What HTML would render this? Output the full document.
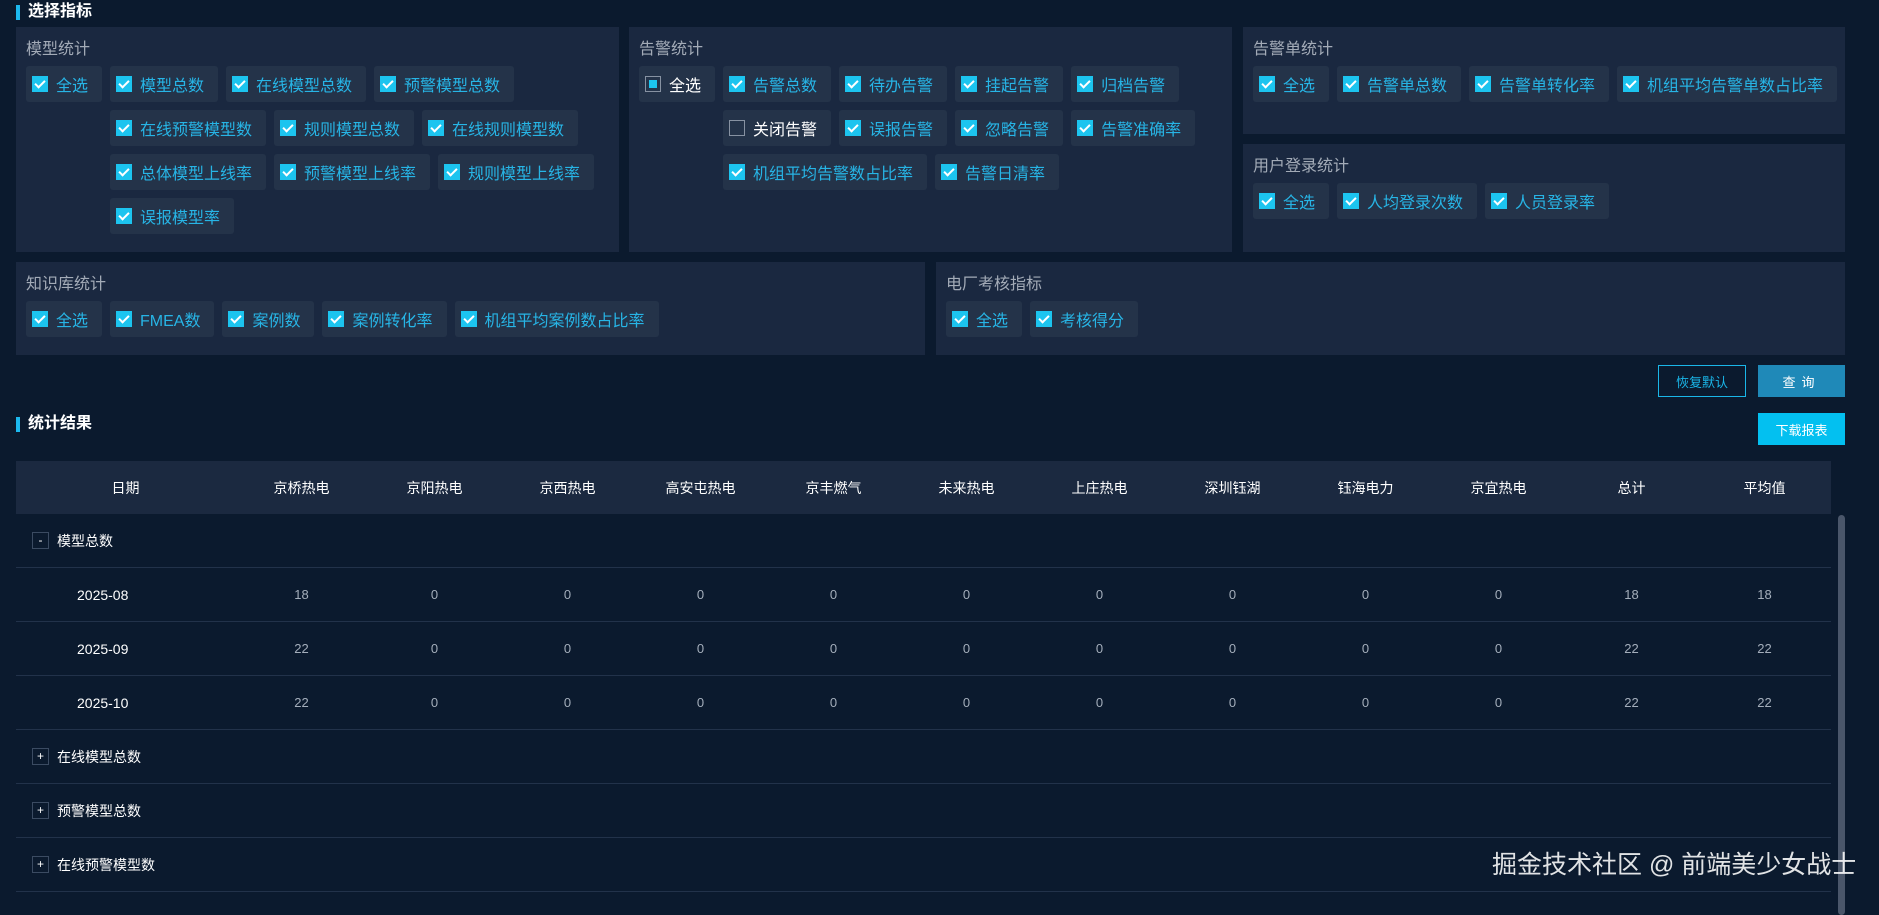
<!DOCTYPE html>
<html><head><meta charset="utf-8"><style>
*{box-sizing:border-box;margin:0;padding:0}
body{width:1879px;height:900px;overflow:hidden;background:#0b1a2e;font-family:"Liberation Sans","Noto Sans CJK SC",sans-serif;position:relative;color:#fff}
.sec{position:absolute;left:16px;font-size:16px;font-weight:bold;color:#fff;padding-left:12px;line-height:20px}
.sec:before{content:"";position:absolute;left:0;top:3px;width:4px;height:15px;background:#1cb8ee}
.panel{position:absolute;background:#1a2840;padding:0 10px}
.pt{position:absolute;left:10px;font-size:16px;color:#a3abb7;line-height:20px}
.row{position:absolute;left:10px;right:6px;display:flex;align-items:flex-start}
.wrap{display:flex;flex-wrap:wrap;gap:8px;margin-left:8px;flex:1}
.it{height:36px;background:#243349;border-radius:3px;display:inline-flex;align-items:center;padding:0 14px 0 6px;font-size:16px;color:#27b5e6;white-space:nowrap;flex:none}
.cb{width:16px;height:16px;background:#1cc4ef;margin-right:8px;position:relative;flex:none}
.cb:after{content:"";position:absolute;left:5px;top:2px;width:4px;height:8px;border:solid #fff;border-width:0 2px 2px 0;transform:rotate(45deg)}
.cb.un{background:transparent;border:1px solid #8792a2}
.cb.un:after,.cb.ind:after{display:none}
.cb.ind{background:transparent;border:1px solid #8792a2}
.cb.ind:before{content:"";position:absolute;left:3px;top:3px;width:8px;height:8px;background:#1cc4ef}
.w{color:#fff}
.btn{position:absolute;height:32px;font-size:13px;display:flex;align-items:center;justify-content:center}
.tbl{position:absolute;left:16px;top:461px;width:1815px}
.tr{display:flex;height:54px;border-bottom:1px solid #22324a;align-items:center}
.th{background:#1b2940;border-bottom:none;height:53px}
.c{width:133px;text-align:center;font-size:13px;color:#a4aebb}
.th .c,.th .d{color:#fff;font-size:14px}
.d{width:219px;font-size:14px;text-align:center}
.dd{width:219px;padding-left:61px;font-size:14px;color:#fff}
.g{display:flex;align-items:center;padding-left:16px;font-size:14px;color:#fff}
.tg{width:17px;height:17px;border:1px solid #3b4b62;font-size:12px;line-height:14px;text-align:center;margin-right:8px;color:#fff}
</style></head><body>
<div class="sec" style="top:2px">选择指标</div>

<div class="panel" style="left:16px;top:27px;width:603px;height:225px">
<div class="pt" style="top:13px">模型统计</div>
<div class="row" style="top:39px">
<span class="it"><i class="cb"></i>全选</span>
<div class="wrap">
<span class="it"><i class="cb"></i>模型总数</span><span class="it"><i class="cb"></i>在线模型总数</span><span class="it"><i class="cb"></i>预警模型总数</span>
<span class="it"><i class="cb"></i>在线预警模型数</span><span class="it"><i class="cb"></i>规则模型总数</span><span class="it"><i class="cb"></i>在线规则模型数</span>
<span class="it"><i class="cb"></i>总体模型上线率</span><span class="it"><i class="cb"></i>预警模型上线率</span><span class="it"><i class="cb"></i>规则模型上线率</span>
<span class="it"><i class="cb"></i>误报模型率</span>
</div></div></div>

<div class="panel" style="left:629px;top:27px;width:603px;height:225px">
<div class="pt" style="top:13px">告警统计</div>
<div class="row" style="top:39px">
<span class="it w"><i class="cb ind"></i>全选</span>
<div class="wrap">
<span class="it"><i class="cb"></i>告警总数</span><span class="it"><i class="cb"></i>待办告警</span><span class="it"><i class="cb"></i>挂起告警</span><span class="it"><i class="cb"></i>归档告警</span>
<span class="it w"><i class="cb un"></i>关闭告警</span><span class="it"><i class="cb"></i>误报告警</span><span class="it"><i class="cb"></i>忽略告警</span><span class="it"><i class="cb"></i>告警准确率</span>
<span class="it"><i class="cb"></i>机组平均告警数占比率</span><span class="it"><i class="cb"></i>告警日清率</span>
</div></div></div>

<div class="panel" style="left:1243px;top:27px;width:602px;height:107px">
<div class="pt" style="top:13px">告警单统计</div>
<div class="row" style="top:39px">
<span class="it"><i class="cb"></i>全选</span>
<div class="wrap">
<span class="it"><i class="cb"></i>告警单总数</span><span class="it"><i class="cb"></i>告警单转化率</span><span class="it"><i class="cb"></i>机组平均告警单数占比率</span>
</div></div></div>

<div class="panel" style="left:1243px;top:144px;width:602px;height:108px">
<div class="pt" style="top:13px">用户登录统计</div>
<div class="row" style="top:39px">
<span class="it"><i class="cb"></i>全选</span>
<div class="wrap">
<span class="it"><i class="cb"></i>人均登录次数</span><span class="it"><i class="cb"></i>人员登录率</span>
</div></div></div>

<div class="panel" style="left:16px;top:262px;width:909px;height:93px">
<div class="pt" style="top:13px">知识库统计</div>
<div class="row" style="top:39px">
<span class="it"><i class="cb"></i>全选</span>
<div class="wrap">
<span class="it"><i class="cb"></i>FMEA数</span><span class="it"><i class="cb"></i>案例数</span><span class="it"><i class="cb"></i>案例转化率</span><span class="it"><i class="cb"></i>机组平均案例数占比率</span>
</div></div></div>

<div class="panel" style="left:936px;top:262px;width:909px;height:93px">
<div class="pt" style="top:13px">电厂考核指标</div>
<div class="row" style="top:39px">
<span class="it"><i class="cb"></i>全选</span>
<div class="wrap">
<span class="it"><i class="cb"></i>考核得分</span>
</div></div></div>

<div class="btn" style="left:1658px;top:365px;width:88px;border:1px solid #1ab6e8;color:#1ab6e8">恢复默认</div>
<div class="btn" style="left:1758px;top:365px;width:87px;background:#1f89b8;color:#fff;letter-spacing:6px">查询</div>
<div class="sec" style="top:414px">统计结果</div>
<div class="btn" style="left:1758px;top:413px;width:87px;background:#03c0f0;color:#fff">下载报表</div>

<div class="tbl">
<div class="tr th"><div class="d">日期</div><div class="c">京桥热电</div><div class="c">京阳热电</div><div class="c">京西热电</div><div class="c">高安屯热电</div><div class="c">京丰燃气</div><div class="c">未来热电</div><div class="c">上庄热电</div><div class="c">深圳钰湖</div><div class="c">钰海电力</div><div class="c">京宜热电</div><div class="c">总计</div><div class="c">平均值</div></div>
<div class="tr"><div class="g"><span class="tg">-</span>模型总数</div></div>
<div class="tr"><div class="dd">2025-08</div><div class="c">18</div><div class="c">0</div><div class="c">0</div><div class="c">0</div><div class="c">0</div><div class="c">0</div><div class="c">0</div><div class="c">0</div><div class="c">0</div><div class="c">0</div><div class="c">18</div><div class="c">18</div></div>
<div class="tr"><div class="dd">2025-09</div><div class="c">22</div><div class="c">0</div><div class="c">0</div><div class="c">0</div><div class="c">0</div><div class="c">0</div><div class="c">0</div><div class="c">0</div><div class="c">0</div><div class="c">0</div><div class="c">22</div><div class="c">22</div></div>
<div class="tr"><div class="dd">2025-10</div><div class="c">22</div><div class="c">0</div><div class="c">0</div><div class="c">0</div><div class="c">0</div><div class="c">0</div><div class="c">0</div><div class="c">0</div><div class="c">0</div><div class="c">0</div><div class="c">22</div><div class="c">22</div></div>
<div class="tr"><div class="g"><span class="tg">+</span>在线模型总数</div></div>
<div class="tr"><div class="g"><span class="tg">+</span>预警模型总数</div></div>
<div class="tr"><div class="g"><span class="tg">+</span>在线预警模型数</div></div>
</div>
<div style="position:absolute;left:1838px;top:515px;width:7px;height:400px;border-radius:4px;background:#4a566a"></div>
<div style="position:absolute;left:1492px;top:845px;font-size:25px;color:rgba(255,255,255,.88);white-space:nowrap">掘金技术社区 @ 前端美少女战士</div>
</body></html>
